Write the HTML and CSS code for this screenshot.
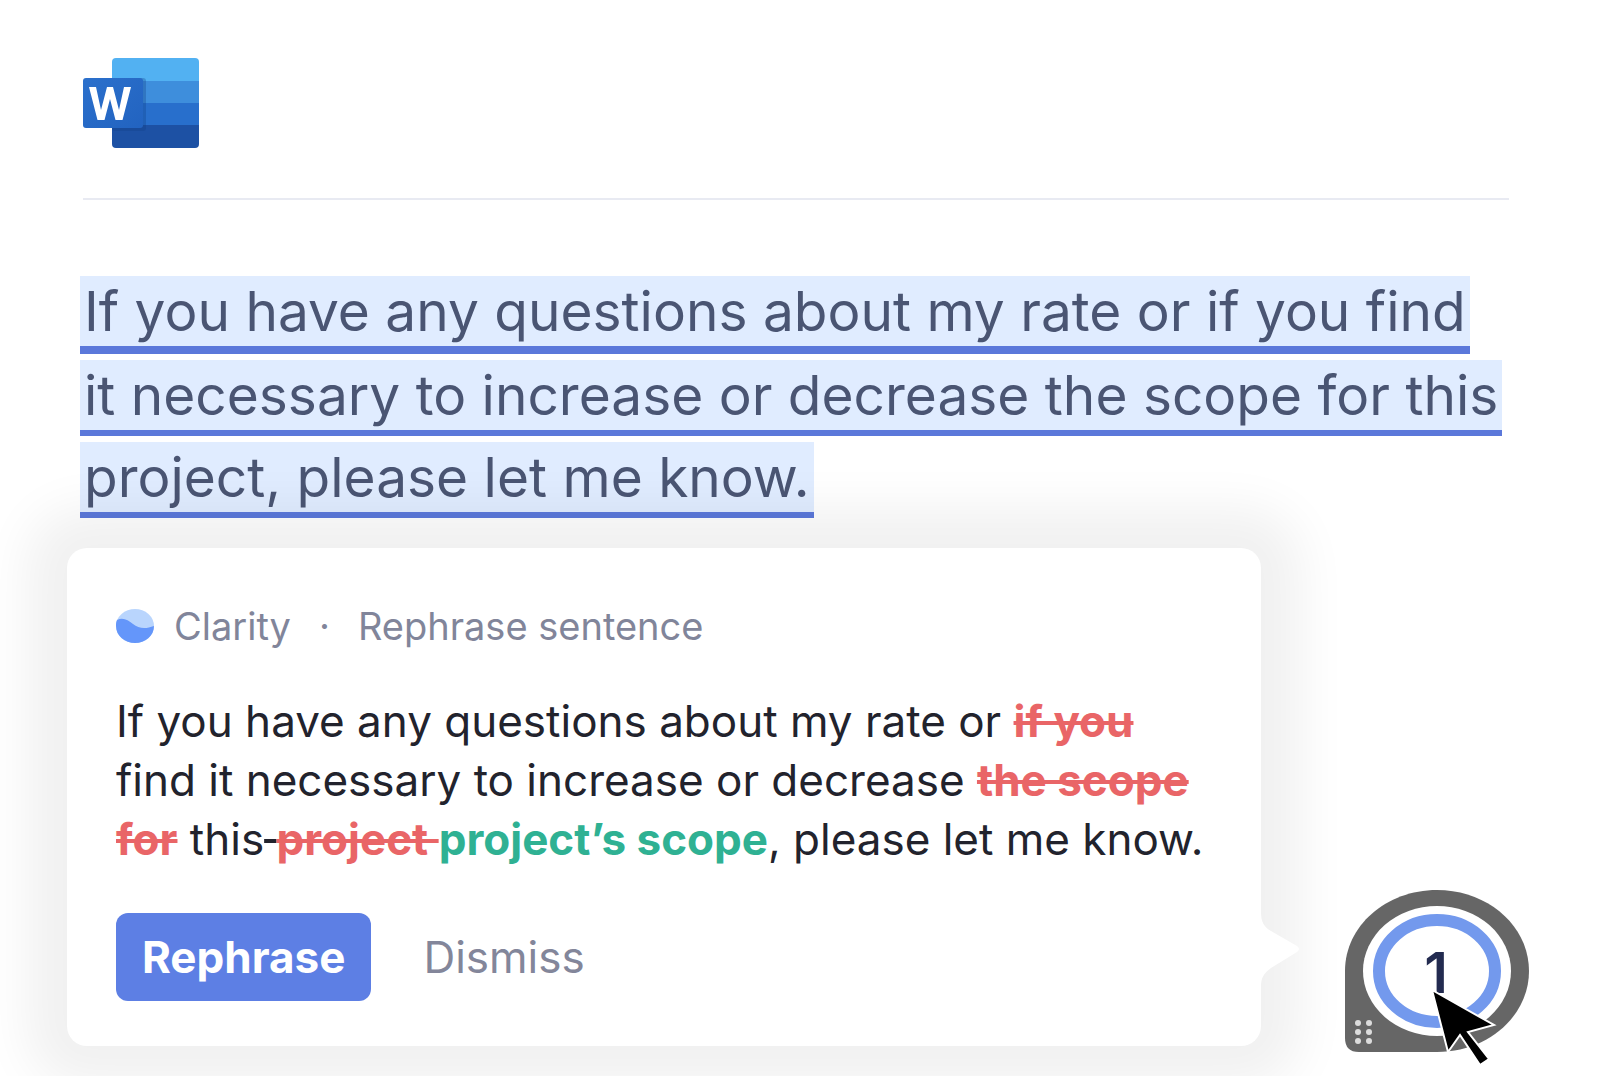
FILE: index.html
```html
<!DOCTYPE html>
<html lang="en">
<head>
<meta charset="utf-8">
<meta name="viewport" content="width=device-width, initial-scale=1">
<title>Rephrase sentence</title>
<link rel="stylesheet" href="styles.css">
</head>
<body>
<main class="page">
  <header class="doc-header">
    <svg class="word-logo" viewBox="0 0 116 90" role="img" aria-label="Word">
      <defs>
        <clipPath id="sheet"><rect x="29" y="0" width="87" height="90" rx="4"/></clipPath>
        <linearGradient id="tile" x1="0" y1="0" x2="1" y2="1"><stop offset="0" stop-color="#2b70cc"/><stop offset="1" stop-color="#2263c0"/></linearGradient>
      </defs>
      <g clip-path="url(#sheet)">
        <rect x="29" width="87" height="23" fill="#52b1f2"/>
        <rect x="29" y="23" width="87" height="22" fill="#3e8edc"/>
        <rect x="29" y="45" width="87" height="22" fill="#286fcc"/>
        <rect x="29" y="67" width="87" height="23" fill="#1d51a4"/>
        <rect x="29" y="20" width="34" height="53" rx="3" fill="#123f86" opacity=".3"/>
      </g>
      <rect y="20" width="60" height="50" rx="3" fill="url(#tile)"/>
      <path d="M6 29h7l5 23 6-23h6l6 23 5-23h7l-8.500 33h-7l-5.500-21-5.500 21h-7z" fill="#fff"/>
    </svg>
  </header>

  <p class="sentence">
    <span class="line line-active">If you have any questions about my rate or if you find</span>
    <span class="line">it necessary to increase or decrease the scope for this</span>
    <span class="line">project, please let me know.</span>
  </p>

  <div class="assist">
    <section class="card">
      <h2 class="card-title">
        <svg class="clarity-icon" viewBox="0 0 38 34" aria-hidden="true">
          <ellipse cx="19" cy="17" rx="19" ry="17" fill="#b9d5fd"/>
          <path d="M1 11C7 8 12 11 17 15c6 5 13 5 21 2C38 27 29 34 19 34S0 27 0 17c0-2 0-4 1-6z" fill="#6496fa"/>
        </svg>
        <span>Clarity</span>
        <span class="dot">·</span>
        <span>Rephrase sentence</span>
      </h2>
      <p class="suggestion">If you have any questions about my rate or <del>if you</del><br>
        find it necessary to increase or decrease <del>the scope</del><br>
        <del>for</del> this<s> </s><del>project </del><ins>project’s scope</ins>, please let me know.</p>
      <div class="actions">
        <button class="btn btn-primary" type="button">Rephrase</button>
        <button class="btn btn-plain" type="button">Dismiss</button>
      </div>
      <svg class="pointer" viewBox="0 0 39 74" aria-hidden="true"><path d="M0 0C0 10 3 15 10 19L36 34q4 3 0 6L10 56C3 61 0 66 0 74z" fill="#fff"/></svg>
    </section>

    <svg class="counter" viewBox="0 0 184 174" role="img" aria-label="1 suggestion">
      <path d="M92 0c51 0 92 36 92 81s-41 81-92 81H14q-14 0-14-14V81C0 36 41 0 92 0z" fill="#666"/>
      <ellipse cx="92" cy="81" rx="74" ry="65" fill="#fff"/>
      <ellipse cx="92" cy="81" rx="58" ry="51" fill="none" stroke="#7399ed" stroke-width="12"/>
      <g fill="#dcdcdc">
        <circle cx="13" cy="133" r="3"/><circle cx="24" cy="133" r="3"/>
        <circle cx="13" cy="142" r="3"/><circle cx="24" cy="142" r="3"/>
        <circle cx="13" cy="151" r="3"/><circle cx="24" cy="151" r="3"/>
      </g>
      <text class="count" x="91" y="103" text-anchor="middle">1</text>
      <path d="M87 100l62 35-26 7 21 27-9 6-20-30-12 17z" fill="#000" stroke="#fff" stroke-width="2"/>
    </svg>
  </div>
</main>
</body>
</html>
```
FILE: styles.css
```css
* {
  box-sizing: border-box;
}

body {
  margin: 0;
  background: #fff;
  font-family: Inter, "Liberation Sans", sans-serif;
}

.page {
  padding: 58px 71px 30px 67px;
}

.doc-header {
  margin: 0 20px 0 16px;
  padding-bottom: 50px;
  border-bottom: 2px solid #e8eaf2;
}

.word-logo {
  display: block;
  width: 116px;
  height: 90px;
}

.sentence {
  display: flex;
  flex-direction: column;
  align-items: flex-start;
  gap: 6px;
  margin: 76px 0 30px 13px;
  color: #4a5573;
  font-size: 55px;
  line-height: 70px;
}

.line {
  padding: 0 4px;
  background: #e0ecff;
  border-bottom: 6px solid #5b78da;
  white-space: nowrap;
}

.line-active {
  border-bottom-width: 8px;
}

.assist {
  display: flex;
  align-items: flex-end;
  gap: 84px;
}

.card {
  position: relative;
  flex: 1;
  padding: 54px 49px 45px;
  background: #fff;
  border-radius: 20px;
  box-shadow: 0 0 50px 40px rgba(0, 0, 0, 0.06);
}

.card-title {
  display: flex;
  align-items: center;
  margin: 0 0 42px;
  color: #81859a;
  font-size: 38px;
  font-weight: 400;
  line-height: 48px;
}

.clarity-icon {
  width: 38px;
  height: 34px;
  margin-right: 20px;
}

.dot {
  margin: 0 28px;
}

.suggestion {
  margin: 0 0 44px;
  color: #22232d;
  font-size: 44px;
  line-height: 59px;
  white-space: nowrap;
}

.suggestion del,
.suggestion s {
  text-decoration-thickness: 4px;
}

.suggestion del {
  color: #e96567;
  font-weight: 700;
}

.suggestion ins {
  color: #2fb193;
  font-weight: 700;
  text-decoration: none;
}

.actions {
  display: flex;
  gap: 26px;
}

.btn {
  padding: 0 26px;
  border: 0;
  border-radius: 12px;
  background: none;
  font: inherit;
  font-size: 44px;
  line-height: 88px;
}

.btn-primary {
  background: #5d7fe4;
  color: #fff;
  font-weight: 700;
}

.btn-plain {
  color: #83869a;
}

.pointer {
  position: absolute;
  left: 100%;
  bottom: 60px;
  width: 39px;
  height: 74px;
}

.counter {
  flex: none;
  width: 184px;
  height: 174px;
  margin-bottom: -18px;
  overflow: visible;
}

.count {
  fill: #232b50;
  font-size: 56px;
  font-weight: 600;
}
```
